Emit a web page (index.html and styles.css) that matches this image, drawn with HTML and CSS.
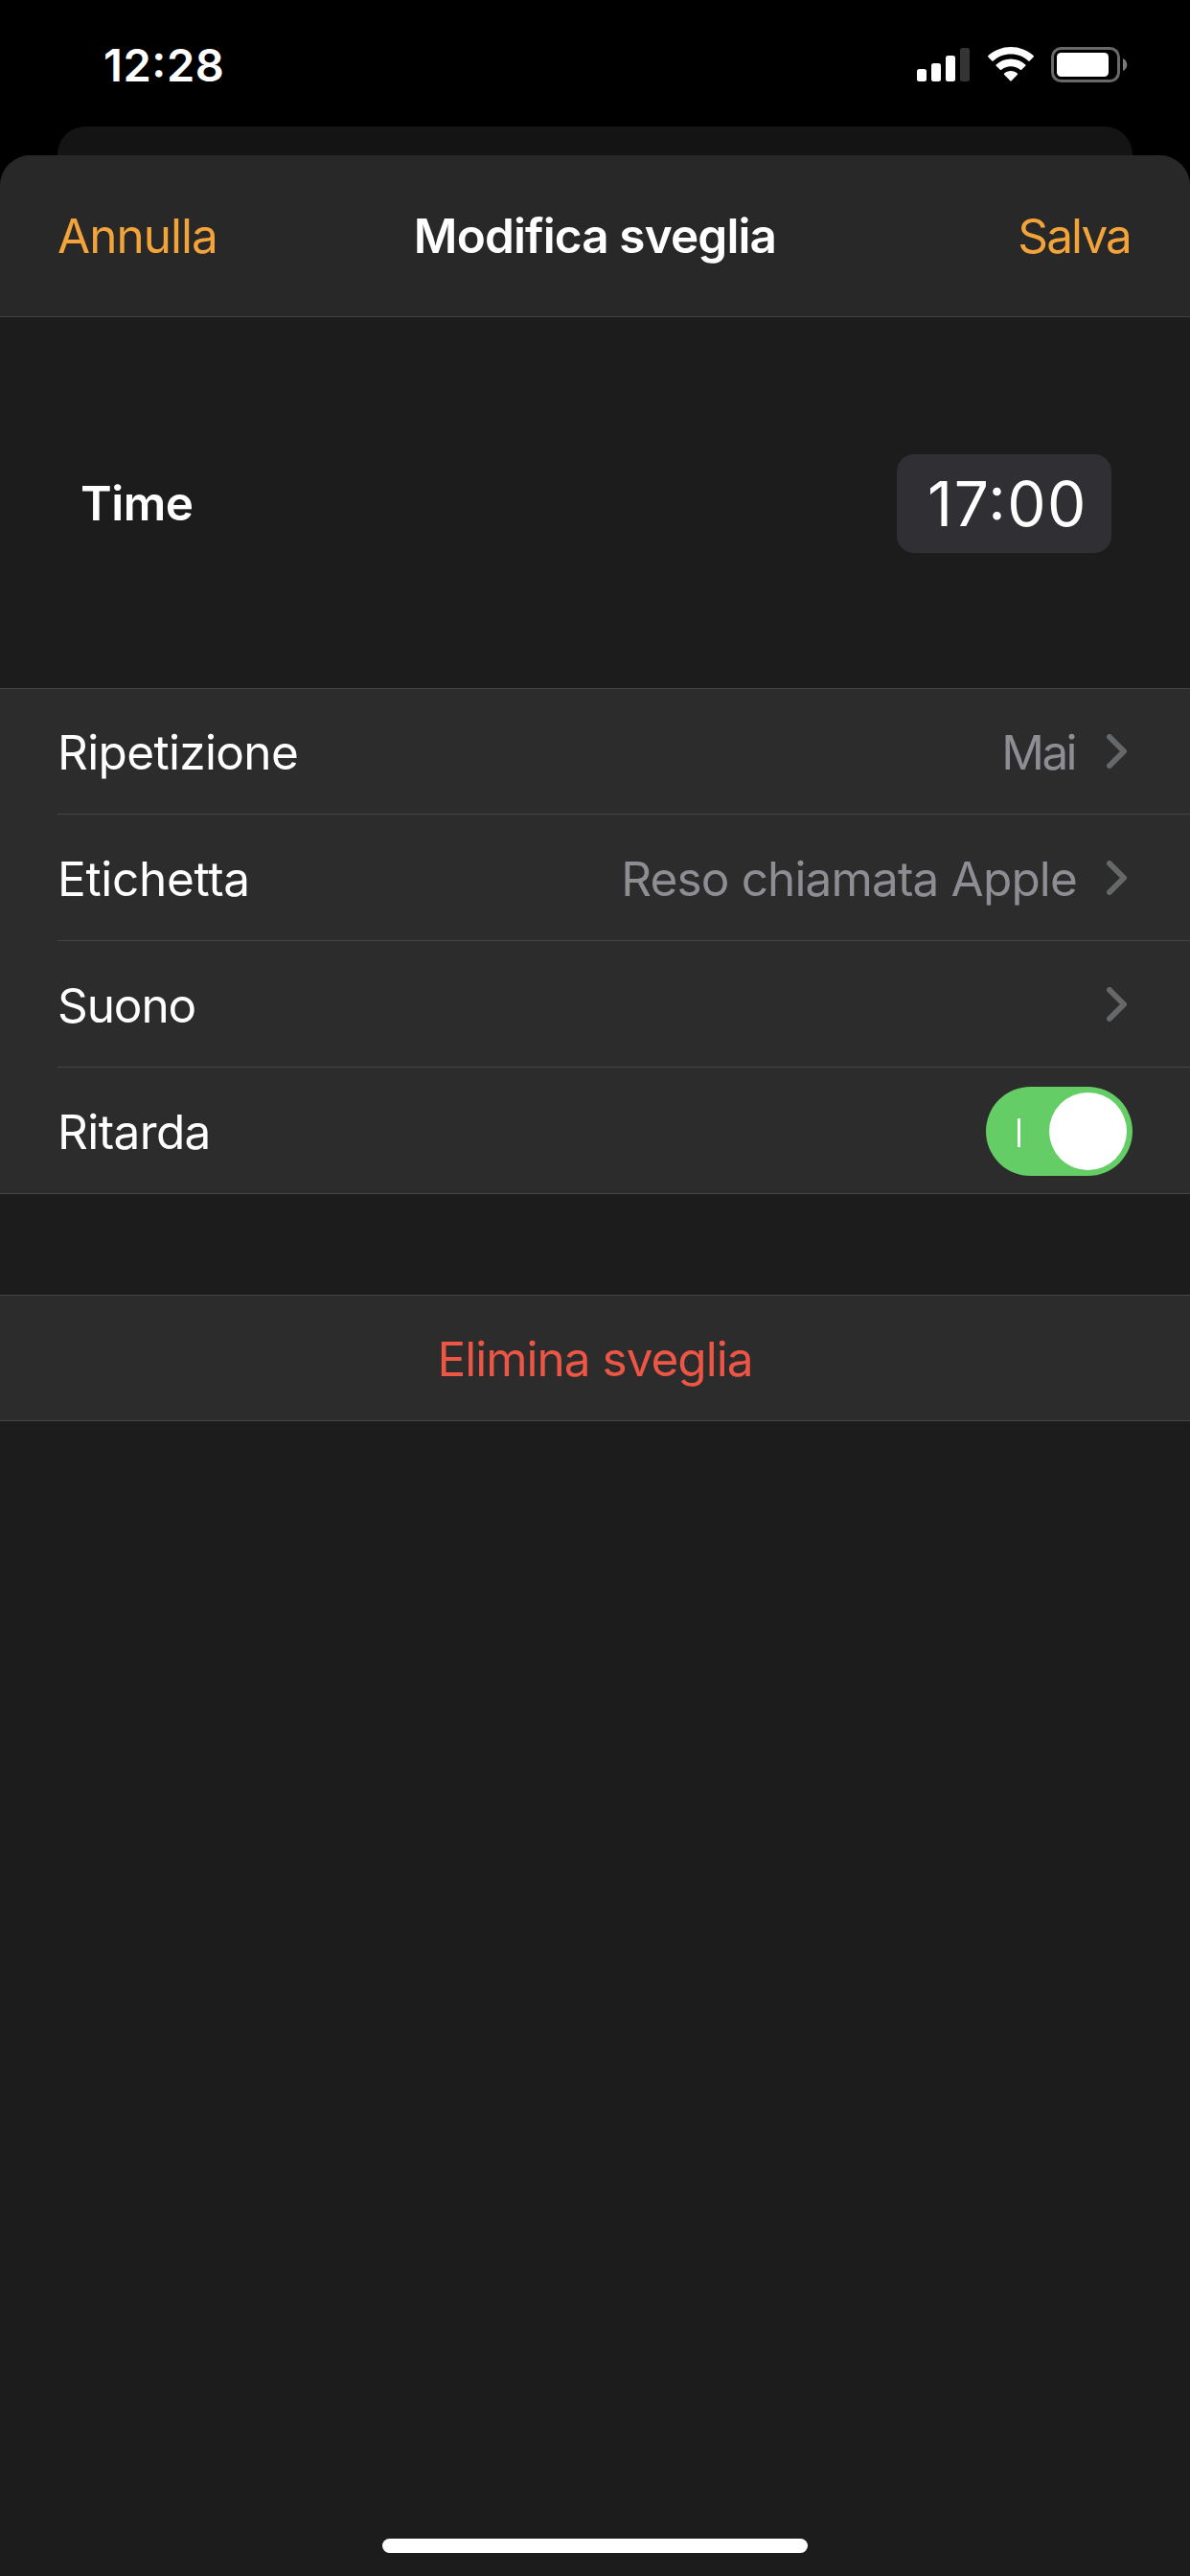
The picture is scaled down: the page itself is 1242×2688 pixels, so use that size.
FILE: index.html
```html
<!DOCTYPE html>
<html lang="it">
<head>
    <meta charset="UTF-8">
    <meta name="viewport" content="width=device-width, initial-scale=1.0">
    <title>Modifica sveglia</title>
    <link rel="stylesheet" href="styles.css">
</head>
<body>
    <div class="status-bar">
        <span class="clock">12:28</span>
        <div class="status-icons">
            <svg class="signal" width="55" height="35" viewBox="0 0 55 35">
                <rect x="0" y="22" width="10" height="13" rx="2.5" fill="#fff"/>
                <rect x="15" y="16" width="10" height="19" rx="2.5" fill="#fff"/>
                <rect x="30" y="8" width="10" height="27" rx="2.5" fill="#fff"/>
                <rect x="45" y="0" width="10" height="35" rx="2.5" fill="#343336"/>
            </svg>
            <svg class="wifi" width="48" height="36" viewBox="0 0 48 36" fill="#fff">
                <path d="M24 0C33 0 41.300 3.400 47.600 9.100Q48.200 9.800 47.600 10.500L43.700 14.600Q43 15.200 42.300 14.600C37.400 10.200 31 7.600 24 7.600C17 7.600 10.600 10.200 5.700 14.600Q5 15.200 4.300 14.600L0.400 10.500Q-0.200 9.800 0.400 9.100C6.700 3.400 15 0 24 0Z"/>
                <path d="M24 12.600C29.900 12.600 35.200 14.800 39.300 18.400Q40 19.100 39.300 19.800L35.200 23.800Q34.500 24.400 33.800 23.800C31.100 21.500 27.700 20.200 24 20.200C20.300 20.200 16.900 21.500 14.200 23.800Q13.500 24.400 12.800 23.800L8.700 19.800Q8 19.100 8.700 18.400C12.800 14.800 18.100 12.600 24 12.600Z"/>
                <path d="M24 25C26.600 25 29 26 30.800 27.600Q31.500 28.300 30.800 29L24.700 35.300Q24 36 23.300 35.300L17.200 29Q16.500 28.300 17.200 27.600C19 26 21.400 25 24 25Z"/>
            </svg>
            <svg class="battery" width="80" height="37" viewBox="0 0 80 37">
                <rect x="1.500" y="1.500" width="69" height="34" rx="9" fill="none" stroke="#69696b" stroke-width="3"/>
                <rect x="6" y="6" width="54" height="25" rx="4.500" fill="#fff"/>
                <path d="M75 12C78 13.500 79.300 16 79.300 18.500S78 23.500 75 25Z" fill="#7a7a7c"/>
            </svg>
        </div>
    </div>

    <div class="back-sheet"></div>

    <div class="sheet">
        <div class="nav">
            <span class="nav-btn cancel">Annulla</span>
            <span class="nav-title">Modifica sveglia</span>
            <span class="nav-btn save">Salva</span>
        </div>

        <div class="time-row">
            <span class="time-label">Time</span>
            <span class="time-value">17:00</span>
        </div>

        <div class="group">
            <div class="row">
                <span class="label repeat">Ripetizione</span>
                <span class="value never">Mai</span>
                <svg class="chevron" width="21" height="36" viewBox="0 0 21 36"><path d="M3 3L18 18L3 33"/></svg>
            </div>
            <div class="row">
                <span class="label tag">Etichetta</span>
                <span class="value note">Reso chiamata Apple</span>
                <svg class="chevron" width="21" height="36" viewBox="0 0 21 36"><path d="M3 3L18 18L3 33"/></svg>
            </div>
            <div class="row">
                <span class="label sound">Suono</span>
                <svg class="chevron" width="21" height="36" viewBox="0 0 21 36"><path d="M3 3L18 18L3 33"/></svg>
            </div>
            <div class="row">
                <span class="label snooze">Ritarda</span>
                <div class="toggle">
                    <div class="toggle-mark"></div>
                    <div class="toggle-knob"></div>
                </div>
            </div>
        </div>

        <div class="group delete-group">
            <span class="delete">Elimina sveglia</span>
        </div>

        <div class="home-indicator"></div>
    </div>
</body>
</html>
```

FILE: styles.css
```css
* {
    box-sizing: border-box;
}
body {
    margin: 0;
    width: 1242px;
    height: 2688px;
    display: flex;
    flex-direction: column;
    background: #000;
    color: #fff;
    font-family: Inter, "Liberation Sans", sans-serif;
    font-size: 49.5px;
    line-height: 60px;
    overflow: hidden;
}
svg {
    display: block;
}
span {
    white-space: nowrap;
}

/* status bar */
.status-bar {
    height: 132px;
    padding: 49px 65px 0 108px;
    display: flex;
    justify-content: space-between;
    align-items: flex-start;
}
.clock {
    font-size: 47px;
    line-height: 38px;
    font-weight: 600;
    letter-spacing: 0.6px;
    font-feature-settings: "calt" 1;
}
.status-icons {
    display: flex;
}
.signal {
    margin-top: 1px;
}
.wifi {
    margin: 0 18px 0 19px;
    width: 48px;
}

/* sheets */
.back-sheet {
    height: 30px;
    margin: 0 60px;
    border-radius: 29px 29px 0 0;
    background: #141414;
}
.sheet {
    flex: 1;
    display: flex;
    flex-direction: column;
    border-radius: 32px 32px 0 0;
    background: #1c1c1c;
}
.nav {
    height: 169px;
    padding: 0 60px;
    display: grid;
    grid-template-columns: 1fr auto 1fr;
    align-items: center;
    border-bottom: 1px solid #434143;
    border-radius: 32px 32px 0 0;
    background: #282828;
}
.nav-btn {
    color: #f2a33a;
}
.cancel {
    letter-spacing: -1px;
}
.save {
    padding-right: 2px;
    text-align: right;
    letter-spacing: -1.9px;
}
.nav-title {
    font-weight: 600;
    letter-spacing: -0.87px;
}

/* time picker */
.time-row {
    height: 387px;
    padding: 1px 82px 0 84px;
    display: flex;
    justify-content: space-between;
    align-items: center;
}
.time-label {
    font-weight: 600;
    letter-spacing: -0.5px;
}
.time-value {
    width: 224px;
    height: 103px;
    padding-left: 7px;
    border-radius: 18px;
    background: #302f34;
    font-size: 64px;
    line-height: 103px;
    letter-spacing: 1.5px;
    font-feature-settings: "calt" 1;
    text-align: center;
}

/* settings */
.group {
    border-top: 1px solid #454545;
    border-bottom: 1px solid #454545;
    background: #2c2c2c;
}
.row {
    height: 132px;
    margin-left: 60px;
    padding-right: 66px;
    display: flex;
    align-items: center;
    border-bottom: 1px solid #454545;
}
.row:first-child {
    height: 131px;
}
.row:last-child {
    height: 131px;
    padding: 2px 60px 0 0;
    border-bottom: none;
}
.label {
    flex: 1;
    padding-top: 2px;
}
.row:last-child .label {
    padding-top: 0;
}
.repeat {
    letter-spacing: -0.65px;
}
.tag {
    letter-spacing: -0.3px;
}
.sound {
    letter-spacing: -1.1px;
}
.snooze {
    letter-spacing: -0.6px;
}
.value {
    margin-right: 31px;
    padding-top: 2px;
    color: #8e8d93;
}
.never {
    margin-right: 33px;
    letter-spacing: -2.6px;
}
.note {
    letter-spacing: -0.85px;
}
.chevron path {
    fill: none;
    stroke: #666768;
    stroke-width: 6;
    stroke-linecap: round;
    stroke-linejoin: round;
}
.toggle {
    width: 153px;
    height: 93px;
    padding: 0 6px 0 33px;
    display: flex;
    align-items: center;
    justify-content: space-between;
    border-radius: 47px;
    background: #65cd66;
}
.toggle-mark {
    width: 3px;
    height: 30px;
    margin-top: 2px;
    background: #fff;
}
.toggle-knob {
    width: 81px;
    height: 81px;
    border-radius: 50%;
    background: #fff;
}
.delete-group {
    height: 132px;
    margin-top: 105px;
    padding-top: 2px;
    display: flex;
    align-items: center;
    justify-content: center;
}
.delete {
    color: #ed5545;
    letter-spacing: -1px;
}

.home-indicator {
    width: 444px;
    height: 15px;
    margin: auto auto 24px;
    border-radius: 8px;
    background: #fff;
}
```
